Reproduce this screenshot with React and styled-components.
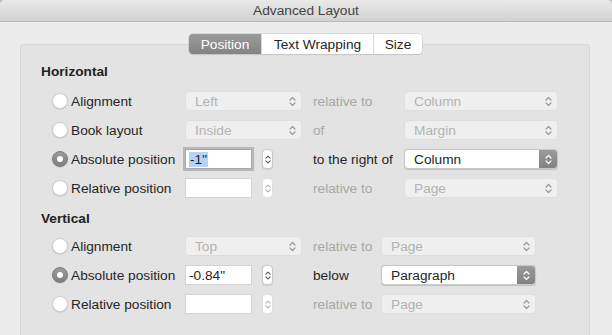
import styled, { createGlobalStyle } from "styled-components";

const GlobalStyle = createGlobalStyle`
  html, body {
    margin: 0;
    padding: 0;
    background: #bdbdbd;
  }
  body {
    font-family: "Liberation Sans", Arial, sans-serif;
    font-size: 13.7px;
    color: #262626;
  }
`;

const Window = styled.div`
  width: 612px;
  height: 335px;
  background: #ececec;
  border-radius: 5px 5px 0 0;
  overflow: hidden;
  display: flex;
  flex-direction: column;
`;

const TitleBar = styled.div`
  height: 21px;
  flex-shrink: 0;
  display: flex;
  align-items: center;
  justify-content: center;
  background: linear-gradient(#e9e9e9, #d2d2d2);
  border-bottom: 1px solid #b8b8b8;
  color: #444;
`;

const Body = styled.div`
  flex: 1;
  display: flex;
  flex-direction: column;
  padding: 12px 22px 0 20px;
`;

const TabBar = styled.div`
  align-self: center;
  display: flex;
  height: 20px;
  margin-left: 1px;
  margin-bottom: -10px;
  position: relative;
  z-index: 1;
  border-radius: 4px;
  box-shadow: 0 0 0 0.5px #c4c4c4, 0 1px 1px rgba(0, 0, 0, 0.12);
  overflow: hidden;
`;

const Tab = styled.div`
  width: ${({ w }) => w}px;
  display: flex;
  align-items: center;
  justify-content: center;
  color: ${({ active }) => (active ? "#ffffff" : "#262626")};
  background: ${({ active }) =>
    active ? "linear-gradient(#9a9a9a, #848484)" : "#ffffff"};
  border-left: ${({ first }) => (first ? "none" : "1px solid #d8d8d8")};
`;

const GroupBox = styled.div`
  flex: 1;
  background: #e3e3e3;
  border: 1px solid #d7d7d7;
  border-bottom: none;
  border-radius: 4px 4px 0 0;
  padding: 19px 0 0 20px;
`;

const Heading = styled.div`
  font-weight: bold;
  line-height: 16px;
  color: #222;
  margin-bottom: ${({ mb }) => mb}px;
`;

const Grid = styled.div`
  display: grid;
  grid-template-columns: 133px 117px ${({ labelCol }) => labelCol}px ${({ popCol }) => popCol}px;
  grid-auto-rows: 20px;
  row-gap: 9px;
  margin-left: 11px;
  margin-bottom: ${({ mb }) => mb || 0}px;
`;

const RadioLabel = styled.label`
  display: flex;
  align-items: center;
  gap: 3px;
  white-space: nowrap;
  color: #262626;
`;

const Radio = styled.span`
  width: 16px;
  height: 16px;
  flex-shrink: 0;
  box-sizing: border-box;
  border-radius: 50%;
  display: flex;
  align-items: center;
  justify-content: center;
  background: ${({ checked }) =>
    checked ? "linear-gradient(#9c9c9c, #7f7f7f)" : "#ffffff"};
  border: 1px solid ${({ checked }) => (checked ? "#7a7a7a" : "#cfcfcf")};
  box-shadow: 0 0.5px 1px rgba(0, 0, 0, 0.15);

  &::after {
    content: "";
    display: ${({ checked }) => (checked ? "block" : "none")};
    width: 6px;
    height: 6px;
    border-radius: 50%;
    background: #ffffff;
  }
`;

const SideLabel = styled.div`
  display: flex;
  align-items: center;
  padding-left: 11px;
  white-space: nowrap;
  color: ${({ disabled }) => (disabled ? "#a8a8a8" : "#262626")};
`;

const Popup = styled.div`
  box-sizing: border-box;
  height: 20px;
  display: flex;
  align-items: center;
  padding-left: 9px;
  border-radius: 4px;
  background: ${({ disabled }) => (disabled ? "#efefef" : "#ffffff")};
  border: 1px solid ${({ disabled }) => (disabled ? "#dedede" : "#c9c9c9")};
  color: ${({ disabled }) => (disabled ? "#b3b3b3" : "#262626")};
  box-shadow: ${({ disabled }) =>
    disabled ? "none" : "0 0.5px 1px rgba(0, 0, 0, 0.15)"};
  overflow: hidden;
`;

const PopupArrow = styled.div`
  margin-left: auto;
  width: 18px;
  align-self: stretch;
  display: flex;
  align-items: center;
  justify-content: center;
  background: ${({ disabled }) =>
    disabled ? "transparent" : "linear-gradient(#9b9b9b, #818181)"};
  color: ${({ disabled }) => (disabled ? "#9a9a9a" : "#ffffff")};
`;

const FieldCell = styled.div`
  display: flex;
  align-items: center;
  gap: 10px;
`;

const TextField = styled.div`
  box-sizing: border-box;
  width: 67px;
  height: 20px;
  display: flex;
  align-items: center;
  padding-left: 3px;
  background: #ffffff;
  border: 1px solid ${({ focused }) => (focused ? "#a9a9a9" : "#d3d3d3")};
  box-shadow: ${({ focused }) => (focused ? "0 0 0 2px #b8b8b8" : "none")};
  color: #262626;
`;

const Selected = styled.span`
  background: #b5d3f5;
  padding: 0 1px;
`;

const Stepper = styled.div`
  box-sizing: border-box;
  width: 11px;
  height: 20px;
  border-radius: 4px;
  display: flex;
  align-items: center;
  justify-content: center;
  background: #ffffff;
  border: 1px solid ${({ disabled }) => (disabled ? "#dedede" : "#c9c9c9")};
  color: ${({ disabled }) => (disabled ? "#b0b0b0" : "#555")};
  box-shadow: ${({ disabled }) =>
    disabled ? "none" : "0 0.5px 1px rgba(0, 0, 0, 0.15)"};
`;

const Chevrons = ({ w = 7, h = 11 }) => (
  <svg width={w} height={h} viewBox="0 0 7 11" fill="none">
    <path
      d="M1 4 L3.5 1.5 L6 4 M1 7 L3.5 9.5 L6 7"
      stroke="currentColor"
      strokeWidth="1.2"
      strokeLinecap="round"
      strokeLinejoin="round"
    />
  </svg>
);

const Select = ({ value, disabled }) => (
  <Popup disabled={disabled}>
    {value}
    <PopupArrow disabled={disabled}>
      <Chevrons />
    </PopupArrow>
  </Popup>
);

const Field = ({ value, focused, disabled }) => (
  <FieldCell>
    <TextField focused={focused}>{value}</TextField>
    <Stepper disabled={disabled}>
      <Chevrons w={6} h={11} />
    </Stepper>
  </FieldCell>
);

const Row = ({ label, checked, control, side, sideDisabled, target, targetDisabled }) => (
  <>
    <RadioLabel>
      <Radio checked={checked} />
      {label}
    </RadioLabel>
    {control}
    <SideLabel disabled={sideDisabled}>{side}</SideLabel>
    <Select value={target} disabled={targetDisabled} />
  </>
);

export default function App() {
  return (
    <>
      <GlobalStyle />
      <Window>
        <TitleBar>Advanced Layout</TitleBar>
        <Body>
          <TabBar>
            <Tab w={72} first active>Position</Tab>
            <Tab w={111}>Text Wrapping</Tab>
            <Tab w={48}>Size</Tab>
          </TabBar>
          <GroupBox>
            <Heading mb={11}>Horizontal</Heading>
            <Grid labelCol={102} popCol={154} mb={13}>
              <Row
                label="Alignment"
                control={<Select value="Left" disabled />}
                side="relative to"
                sideDisabled
                target="Column"
                targetDisabled
              />
              <Row
                label="Book layout"
                control={<Select value="Inside" disabled />}
                side="of"
                sideDisabled
                target="Margin"
                targetDisabled
              />
              <Row
                label="Absolute position"
                checked
                control={<Field value={<Selected>-1"</Selected>} focused />}
                side="to the right of"
                target="Column"
              />
              <Row
                label="Relative position"
                control={<Field value="" disabled />}
                side="relative to"
                sideDisabled
                target="Page"
                targetDisabled
              />
            </Grid>
            <Heading mb={9}>Vertical</Heading>
            <Grid labelCol={79} popCol={155}>
              <Row
                label="Alignment"
                control={<Select value="Top" disabled />}
                side="relative to"
                sideDisabled
                target="Page"
                targetDisabled
              />
              <Row
                label="Absolute position"
                checked
                control={<Field value={'-0.84"'} />}
                side="below"
                target="Paragraph"
              />
              <Row
                label="Relative position"
                control={<Field value="" disabled />}
                side="relative to"
                sideDisabled
                target="Page"
                targetDisabled
              />
            </Grid>
          </GroupBox>
        </Body>
      </Window>
    </>
  );
}
